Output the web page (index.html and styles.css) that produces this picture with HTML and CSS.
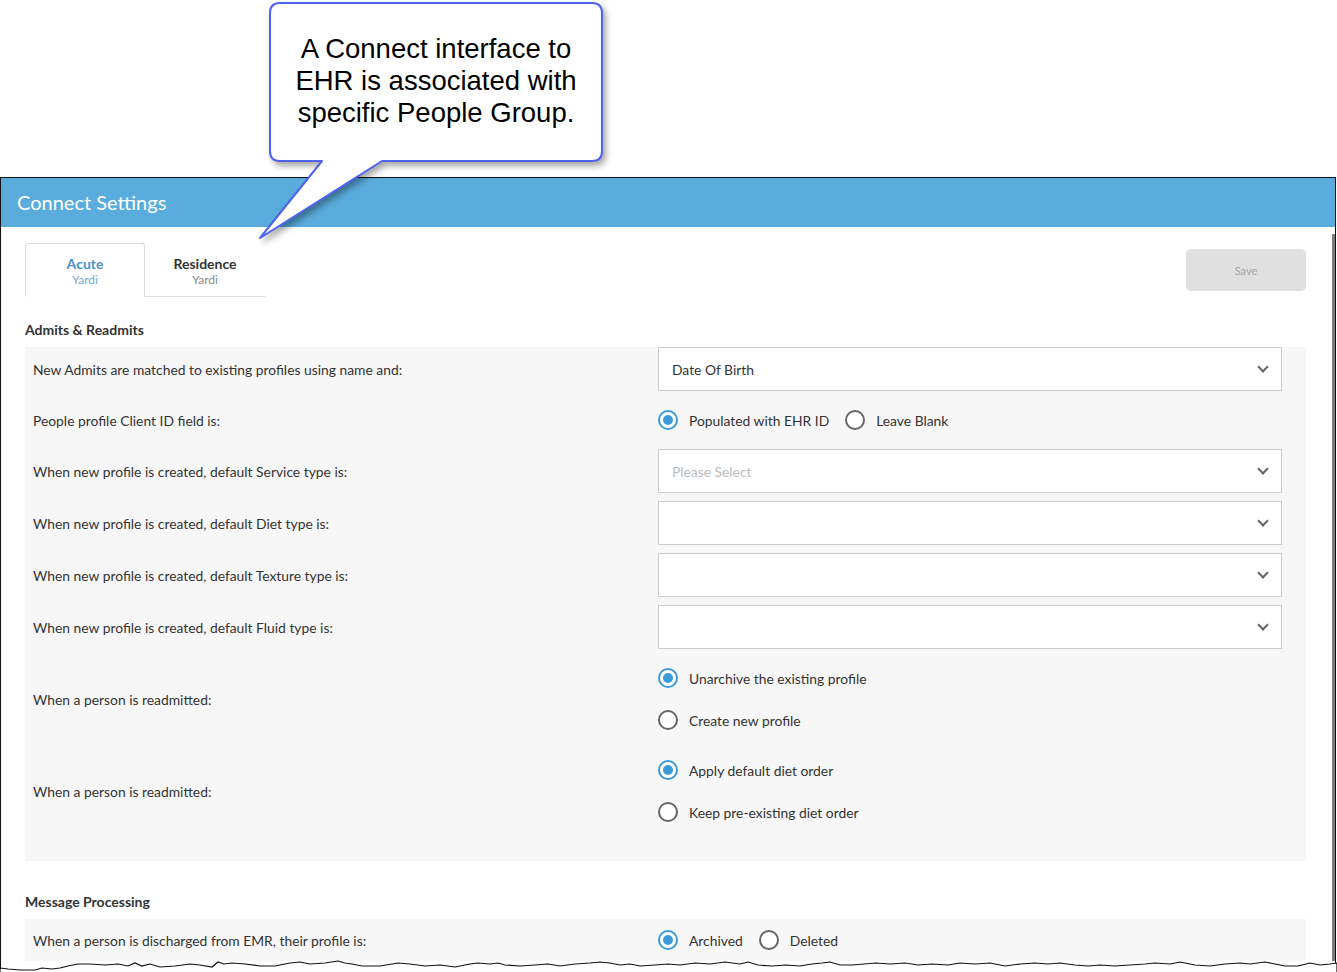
FILE: index.html
```html
<!DOCTYPE html>
<html lang="en">
<head>
    <meta charset="UTF-8">
    <meta name="viewport" content="width=device-width, initial-scale=1.0">
    <title>Connect Settings</title>
    <link rel="stylesheet" href="styles.css">
</head>
<body>
    <div class="page">
        <!-- callout note on top of the screenshot -->
        <div class="callout">
            <svg class="callout-shape" width="370" height="250" viewBox="0 0 370 250">
                <path d="M30,3 H342 Q352,3 352,13 V151 Q352,161 342,161 H132 L10,238 L72,161 H30 Q20,161 20,151 V13 Q20,3 30,3 Z" fill="#fff" stroke="#4f63ef" stroke-width="2" stroke-linejoin="round"/>
            </svg>
            <p class="callout-text">A Connect interface to EHR is associated with specific People Group.</p>
        </div>

        <div class="frame">
            <div class="frame-head">Connect Settings</div>
            <div class="frame-body">
                <div class="toolbar">
                    <div class="tabs">
                        <div class="tab active">
                            <span class="tab-name">Acute</span>
                            <span class="tab-sub">Yardi</span>
                        </div>
                        <div class="tab">
                            <span class="tab-name">Residence</span>
                            <span class="tab-sub">Yardi</span>
                        </div>
                    </div>
                    <button class="btn-save">Save</button>
                </div>

                <h3 class="section-title">Admits &amp; Readmits</h3>
                <div class="panel">
                    <div class="row">
                        <div class="row-label">New Admits are matched to existing profiles using name and:</div>
                        <div class="select"><span>Date Of Birth</span><i class="chev"></i></div>
                    </div>
                    <div class="row row-radio">
                        <div class="row-label">People profile Client ID field is:</div>
                        <div class="radios">
                            <label class="radio checked"><i></i>Populated with EHR ID</label>
                            <label class="radio"><i></i>Leave Blank</label>
                        </div>
                    </div>
                    <div class="row">
                        <div class="row-label">When new profile is created, default Service type is:</div>
                        <div class="select"><span class="placeholder">Please Select</span><i class="chev"></i></div>
                    </div>
                    <div class="row">
                        <div class="row-label">When new profile is created, default Diet type is:</div>
                        <div class="select"><span></span><i class="chev"></i></div>
                    </div>
                    <div class="row">
                        <div class="row-label">When new profile is created, default Texture type is:</div>
                        <div class="select"><span></span><i class="chev"></i></div>
                    </div>
                    <div class="row">
                        <div class="row-label">When new profile is created, default Fluid type is:</div>
                        <div class="select"><span></span><i class="chev"></i></div>
                    </div>
                    <div class="row">
                        <div class="row-label">When a person is readmitted:</div>
                        <div class="radios stacked">
                            <label class="radio checked"><i></i>Unarchive the existing profile</label>
                            <label class="radio"><i></i>Create new profile</label>
                        </div>
                    </div>
                    <div class="row">
                        <div class="row-label">When a person is readmitted:</div>
                        <div class="radios stacked">
                            <label class="radio checked"><i></i>Apply default diet order</label>
                            <label class="radio"><i></i>Keep pre-existing diet order</label>
                        </div>
                    </div>
                </div>

                <h3 class="section-title">Message Processing</h3>
                <div class="panel panel-open">
                    <div class="row row-radio">
                        <div class="row-label">When a person is discharged from EMR, their profile is:</div>
                        <div class="radios">
                            <label class="radio checked"><i></i>Archived</label>
                            <label class="radio"><i></i>Deleted</label>
                        </div>
                    </div>
                </div>
            </div>
        </div>

        <!-- torn bottom edge of the screenshot -->
        <svg class="torn" width="1337" height="20" viewBox="0 0 1337 20">
            <path d="M0,8 L8,9 L20,10 L35,10 L42,8 L52,9 L60,8 L68,6 L78,4 L90,4 L105,5 L118,4 L128,6 L135,3 L142,6 L150,4 L160,7 L175,6 L190,4 L200,5 L212,7 L218,2 L224,4 L232,3 L245,4 L260,6 L275,6 L290,3 L300,2 L310,4 L325,3 L338,1 L345,3 L352,4 L362,6 L380,6 L392,4 L398,3 L410,4 L425,6 L440,5 L455,7 L470,4 L478,3 L490,4 L498,3 L505,5 L520,6 L535,5 L548,4 L560,6 L575,4 L590,3 L600,2 L610,3 L620,5 L630,4 L640,6 L655,5 L668,4 L680,5 L695,3 L710,4 L725,2 L740,4 L748,2 L758,5 L772,6 L786,5 L800,6 L812,4 L822,3 L830,2 L840,5 L852,5 L864,4 L876,3 L890,4 L905,3 L918,5 L932,4 L948,5 L960,3 L975,4 L990,3 L1005,6 L1020,4 L1035,3 L1048,4 L1060,3 L1075,5 L1088,6 L1100,5 L1115,6 L1130,5 L1145,4 L1155,3 L1170,4 L1180,2 L1195,5 L1210,6 L1225,4 L1240,3 L1250,4 L1265,2 L1275,4 L1285,6 L1298,6 L1310,3 L1320,5 L1330,4 L1337,3 L1337,20 L0,20 Z" fill="#fff" stroke="#111" stroke-width="1.2"/>
        </svg>
    </div>
</body>
</html>
```

FILE: styles.css
```css
* {
    margin: 0;
    padding: 0;
    box-sizing: border-box;
}
body {
    font-family: 'Lato', 'Noto Sans', sans-serif;
    background: #fff;
    color: #333;
    width: 1337px;
    height: 972px;
    overflow: hidden;
}
.page {
    position: relative;
    height: 972px;
    padding-top: 177px;
}
.callout {
    position: absolute;
    left: 250px;
    top: 0;
    width: 370px;
    height: 250px;
    z-index: 10;
}
.callout-shape {
    display: block;
    filter: drop-shadow(3px 4px 3px rgba(0, 0, 0, 0.35));
}
.callout-text {
    position: absolute;
    left: 24px;
    top: 33px;
    width: 324px;
    font-family: 'Liberation Sans', Arial, sans-serif;
    font-size: 27.5px;
    line-height: 32px;
    text-align: center;
    color: #000;
}
.frame {
    width: 1336px;
    height: 795px;
    border: 1px solid #111;
    border-bottom: none;
    overflow: hidden;
}
.frame-head {
    height: 49px;
    background: #5aacdc;
    color: #fff;
    font-size: 20px;
    line-height: 48px;
    padding-left: 16px;
}
.frame-body {
    position: relative;
    padding: 16px 29px 0 24px;
}
.frame-body::after {
    content: '';
    position: absolute;
    right: 0;
    top: 7px;
    bottom: 0;
    width: 3px;
    background: #7d7d7d;
}
.toolbar {
    display: flex;
    justify-content: space-between;
    align-items: flex-start;
    margin-bottom: 24px;
}
.tabs {
    display: flex;
}
.tab {
    width: 120px;
    height: 54px;
    display: flex;
    flex-direction: column;
    align-items: center;
    justify-content: center;
    border-bottom: 1px solid #ddd;
    padding-top: 2px;
}
.tab.active {
    border: 1px solid #ddd;
    border-bottom: 1px solid #fff;
    border-radius: 3px 3px 0 0;
}
.tab-name {
    font-size: 14px;
    font-weight: 700;
    line-height: 17px;
    color: #333;
}
.tab-sub {
    font-size: 12px;
    line-height: 15px;
    color: #888;
}
.tab.active .tab-name {
    color: #4a8fcb;
}
.tab.active .tab-sub {
    color: #76aad8;
}
.btn-save {
    margin-top: 6px;
    width: 120px;
    height: 42px;
    border: none;
    border-radius: 5px;
    background: #e0e0e0;
    color: #a5a5a5;
    font-family: 'Lato', sans-serif;
    font-size: 11px;
}
.section-title {
    font-size: 14px;
    font-weight: 700;
    line-height: 18px;
    color: #333;
    margin-bottom: 8px;
}
.panel {
    background: #f7f7f7;
    padding: 0 24px 20px 8px;
    margin-bottom: 32px;
}
.panel-open {
    padding-bottom: 0;
}
.row {
    display: grid;
    grid-template-columns: 625px 1fr;
    align-items: center;
    font-size: 13.85px;
    margin-bottom: 8px;
}
.row-radio {
    height: 42px;
}
.row-label {
    color: #333;
}
.select {
    height: 44px;
    background: #fff;
    border: 1px solid #ccc;
    display: flex;
    align-items: center;
    justify-content: space-between;
    padding: 0 14px 0 13px;
    color: #333;
}
.placeholder {
    color: #bbb;
}
.chev {
    width: 8px;
    height: 8px;
    border-right: 2px solid #666;
    border-bottom: 2px solid #666;
    transform: rotate(45deg);
    margin-top: -4px;
}
.radios {
    display: flex;
    align-items: center;
    gap: 16px;
}
.radios.stacked {
    flex-direction: column;
    align-items: flex-start;
    gap: 0;
}
.radios.stacked .radio {
    height: 42px;
}
.radio {
    display: flex;
    align-items: center;
    gap: 11px;
    color: #333;
}
.radio i {
    width: 20px;
    height: 20px;
    border: 2px solid #666;
    border-radius: 50%;
    background: #fff;
    display: flex;
    align-items: center;
    justify-content: center;
}
.radio.checked i {
    border-color: #3d9ad8;
}
.radio.checked i::after {
    content: '';
    width: 10px;
    height: 10px;
    border-radius: 50%;
    background: #3d9ad8;
}
.torn {
    position: absolute;
    left: 0;
    top: 960px;
    z-index: 5;
}
```
